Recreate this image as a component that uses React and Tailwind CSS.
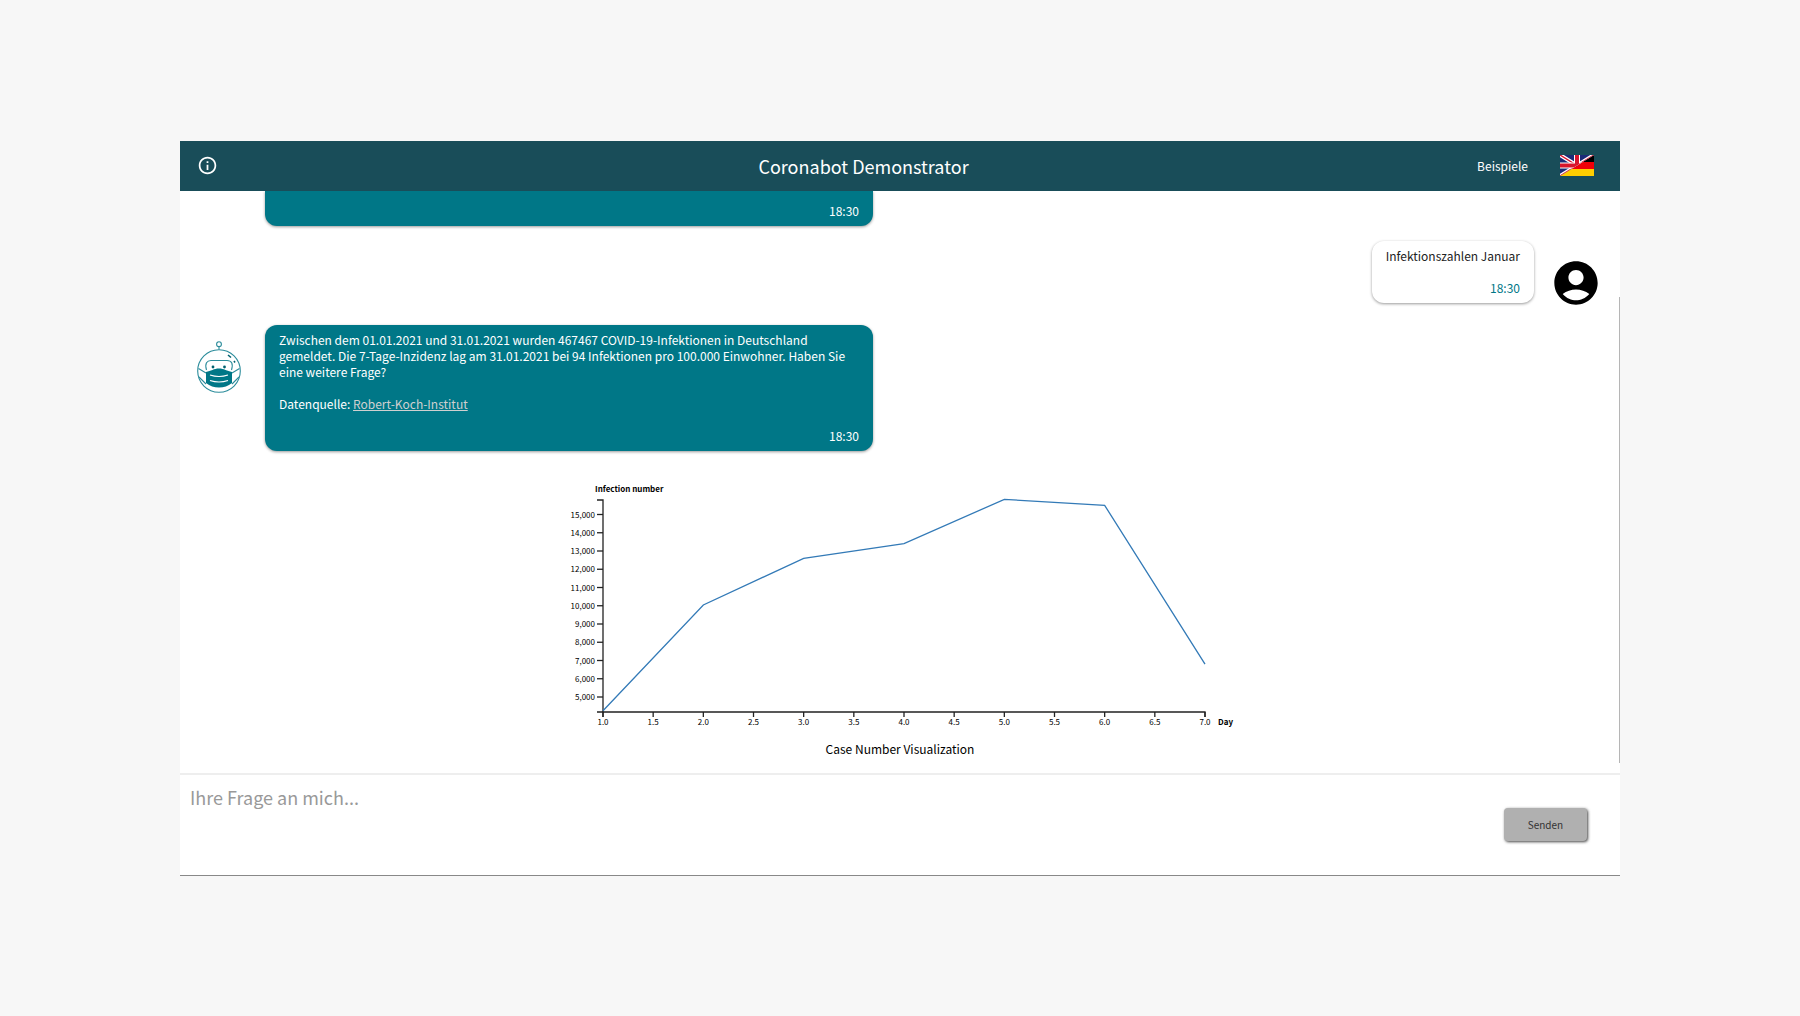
import React, { useState } from "react";
import { MdAccountCircle, MdInfoOutline } from "react-icons/md";

const chartData = [
  { day: 1, value: 4250 },
  { day: 2, value: 10040 },
  { day: 3, value: 12600 },
  { day: 4, value: 13400 },
  { day: 5, value: 15830 },
  { day: 6, value: 15500 },
  { day: 7, value: 6800 },
];

const yTicks = [
  15000, 14000, 13000, 12000, 11000, 10000, 9000, 8000, 7000, 6000, 5000,
];
const xTicks = [1, 1.5, 2, 2.5, 3, 3.5, 4, 4.5, 5, 5.5, 6, 6.5, 7];

const AXIS = { left: 63, right: 665, top: 25, bottom: 237 };

function xPos(day) {
  return AXIS.left + ((day - 1) / 6) * (AXIS.right - AXIS.left);
}

function yPos(value) {
  return 222 - ((value - 5000) / 10000) * 182.5;
}

function LanguageFlag() {
  return (
    <svg width="34" height="21" viewBox="0 0 34 21" aria-hidden="true">
      <rect width="34" height="7" fill="#000" />
      <rect y="7" width="34" height="7" fill="#f00008" />
      <rect y="14" width="34" height="7" fill="#ffce00" />
      <clipPath id="uk">
        <path d="M0 0H34L0 21Z" />
      </clipPath>
      <g clipPath="url(#uk)">
        <rect width="34" height="21" fill="#1b2a78" />
        <path d="M0 0L34 21M34 0L0 21" stroke="#fff" strokeWidth="4" />
        <path d="M0 0L34 21M34 0L0 21" stroke="#d8142c" strokeWidth="1.4" />
        <path d="M17 0V21M0 10.5H34" stroke="#fff" strokeWidth="6" />
        <path d="M17 0V21M0 10.5H34" stroke="#d8142c" strokeWidth="4" />
      </g>
    </svg>
  );
}

function BotAvatar() {
  return (
    <svg
      width="44"
      height="52"
      viewBox="0 0 44 52"
      fill="none"
      stroke="#2b8c9b"
      strokeWidth="1.1"
      aria-label="Coronabot"
    >
      <circle cx="22" cy="3.2" r="2.4" />
      <path d="M22 5.6V8.4" />
      <circle cx="22" cy="30" r="21.3" />
      <path d="M9.5 29C7.5 22.5 10 19.5 14 19.5H30C34.5 19.5 36.5 22.5 34.5 29" />
      <path
        d="M31 14L34 16.5M37 20L38 21.5"
        stroke="#00616f"
        strokeWidth="1.6"
      />
      <circle cx="16" cy="26" r="1.4" fill="#00616f" stroke="none" />
      <circle cx="27.5" cy="26" r="1.4" fill="#00616f" stroke="none" />
      <path d="M9 32L1.5 27.5M9 43L2 36M35 32L42.5 27.5M35 43L42 36" />
      <path
        d="M9 31C14 30 17 27.5 22 27.5S30 30 35 31V42C31 45 27 46.5 22 46.5S13 45 9 42Z"
        fill="#007787"
        stroke="none"
      />
      <path
        d="M13 34C19 36 25 36 31 34M13 39.5C19 41.5 25 41.5 31 39.5"
        stroke="#fff"
        strokeWidth="1.2"
      />
    </svg>
  );
}

function CaseChart() {
  const points = chartData
    .map((d) => `${xPos(d.day)},${yPos(d.value)}`)
    .join(" ");

  return (
    <figure className="flex flex-col items-center">
      <svg
        width="720"
        height="260"
        viewBox="0 0 720 260"
        className="text-[8px]"
      >
        <text x="55" y="17" className="font-bold">
          Infection number
        </text>
        <path
          d={`M${AXIS.left - 6} ${AXIS.top}H${AXIS.left}V${AXIS.bottom}H${AXIS.left - 6}`}
          fill="none"
          stroke="#222"
          strokeWidth="1.3"
        />
        <path
          d={`M${AXIS.left} ${AXIS.bottom + 5}V${AXIS.bottom}H${AXIS.right}V${AXIS.bottom + 5}`}
          fill="none"
          stroke="#222"
          strokeWidth="1.3"
        />
        {yTicks.map((tick) => (
          <g key={tick}>
            <path
              d={`M${AXIS.left - 6} ${yPos(tick)}H${AXIS.left}`}
              stroke="#222"
              strokeWidth="1.3"
            />
            <text x={AXIS.left - 8} y={yPos(tick) + 3} textAnchor="end">
              {tick.toLocaleString("en-US")}
            </text>
          </g>
        ))}
        {xTicks.map((tick) => (
          <g key={tick}>
            <path
              d={`M${xPos(tick)} ${AXIS.bottom}V${AXIS.bottom + 5}`}
              stroke="#222"
              strokeWidth="1.3"
            />
            <text x={xPos(tick)} y={AXIS.bottom + 13} textAnchor="middle">
              {tick.toFixed(1)}
            </text>
          </g>
        ))}
        <text x="678" y="250" className="font-bold">
          Day
        </text>
        <polyline
          points={points}
          fill="none"
          stroke="#337ab7"
          strokeWidth="1.3"
        />
      </svg>
      <figcaption className="mt-[6px] text-black">
        Case Number Visualization
      </figcaption>
    </figure>
  );
}

export default function App() {
  const [question, setQuestion] = useState("");

  function handleSubmit(e) {
    e.preventDefault();
    if (!question) return;
    setQuestion("");
  }

  return (
    <div className="min-h-screen flex items-center justify-center bg-[#f7f7f7] font-['Noto_Sans_CJK_SC',sans-serif] text-xs leading-4">
      <div className="w-4/5 flex flex-col bg-white">
        <header className="h-[50px] pl-[17px] pr-[26px] flex items-center bg-[#194d59] text-white">
          <button type="button" aria-label="Info">
            <MdInfoOutline size={21} />
          </button>
          <h1 className="flex-1 pl-8 text-center text-lg leading-6">
            Coronabot Demonstrator
          </h1>
          <div className="flex items-center gap-8">
            <a href="#beispiele">Beispiele</a>
            <button type="button" aria-label="Sprache">
              <LanguageFlag />
            </button>
          </div>
        </header>

        <main className="relative pb-4 overflow-hidden">
          <div className="ml-[85px] w-[608px] h-[35px] px-[14px] pb-[7px] flex items-end justify-end rounded-b-xl bg-[#007787] text-white shadow-[0_1px_3px_rgba(0,0,0,0.4)]">
            <time>18:30</time>
          </div>

          <div className="mt-[15px] pr-[18px] flex items-end justify-end gap-4">
            <div className="px-[14px] py-[7px] flex flex-col gap-4 rounded-xl bg-white text-[#222] shadow-[0_1px_3px_rgba(0,0,0,0.4)]">
              <p>Infektionszahlen Januar</p>
              <time className="text-right text-[#007787]">18:30</time>
            </div>
            <MdAccountCircle size={52} className="-mb-[6px] text-black" />
          </div>

          <div className="mt-[22px] pl-[17px] flex items-start gap-6">
            <div className="mt-4">
              <BotAvatar />
            </div>
            <div className="w-[608px] px-[14px] py-[7px] flex flex-col gap-4 rounded-xl bg-[#007787] text-white shadow-[0_1px_3px_rgba(0,0,0,0.4)]">
              <p>
                Zwischen dem 01.01.2021 und 31.01.2021 wurden 467467
                COVID-19-Infektionen in Deutschland gemeldet. Die
                7-Tage-Inzidenz lag am 31.01.2021 bei 94 Infektionen pro 100.000
                Einwohner. Haben Sie eine weitere Frage?
              </p>
              <p>
                Datenquelle:{" "}
                <a href="#rki" className="text-[#d0d0d0] underline">
                  Robert-Koch-Institut
                </a>
              </p>
              <time className="text-right">18:30</time>
            </div>
          </div>

          <div className="mt-6">
            <CaseChart />
          </div>

          {/* scroll thumb */}
          <div className="absolute right-0 top-[106px] bottom-[10px] w-px bg-[#b5b5b5]" />
        </main>

        <form
          onSubmit={handleSubmit}
          className="h-[103px] flex items-center border-t-2 border-b border-t-[#eee] border-b-[#888]"
        >
          <textarea
            aria-label="Ihre Frage"
            value={question}
            onChange={(e) => setQuestion(e.target.value)}
            placeholder="Ihre Frage an mich..."
            className="h-full flex-1 resize-none px-[10px] pt-[10px] text-lg leading-6 outline-none placeholder:text-[#999]"
          />
          <button
            type="submit"
            className="mr-[33px] w-[83px] h-[33px] rounded bg-[#b0b0b0] text-[10px] text-[#333] shadow-[1px_1px_3px_#444]"
          >
            Senden
          </button>
        </form>
      </div>
    </div>
  );
}
